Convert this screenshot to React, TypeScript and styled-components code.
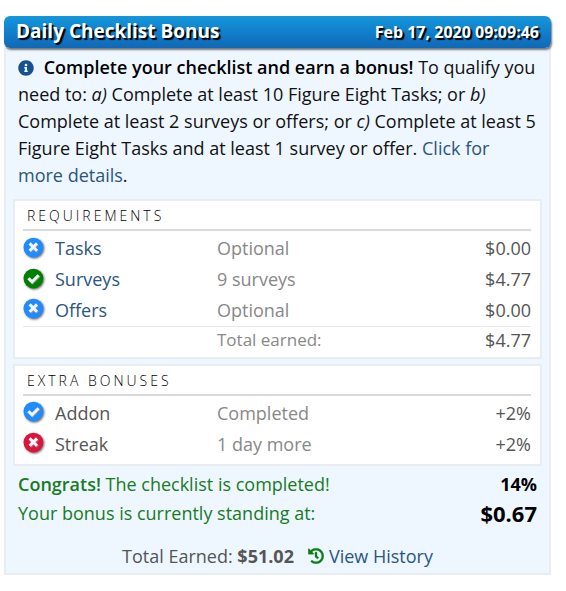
import React from "react";
import styled, { createGlobalStyle } from "styled-components";
import { FaHistory, FaInfoCircle } from "react-icons/fa";

const GlobalStyle = createGlobalStyle`
  *, *::before, *::after { box-sizing: border-box; }
  body {
    margin: 0;
    background: #fff;
    color: #111;
    font-family: "Open Sans", "Noto Sans", sans-serif;
    font-size: 18px;
    line-height: 27px;
  }
`;

const Page = styled.main`
  padding: 16px 15px 16px 4px;
`;

const Header = styled.header`
  position: relative;
  display: flex;
  align-items: center;
  justify-content: space-between;
  height: 32px;
  padding: 0 12px;
  border-radius: 6px;
  background: linear-gradient(#1497dc, #0f68b8);
  box-shadow: 1px 2px 2px #777;
  color: #fff;
  text-shadow: 2px 2px 1px #000;
`;

const Title = styled.h1`
  margin: 0;
  padding-bottom: 2px;
  font-size: 19px;
  font-weight: 700;
`;

const Clock = styled.time`
  font-size: 16px;
  font-weight: 700;
`;

const Body = styled.div`
  padding: 6px 7px 3px;
  border: 2px solid #e9edf1;
  border-top: 0;
  background: #eef7ff;
`;

const Intro = styled.p`
  margin: 0 4px 10px 5px;

  strong {
    margin-left: 5px;
    color: #000;
    font-weight: 600;
  }

  svg {
    color: #17528f;
    font-size: 16px;
    vertical-align: -2px;
  }
`;

const Link = styled.a`
  color: #2a5583;
  text-decoration: none;
`;

const Panel = styled.section`
  margin-bottom: 5px;
  padding: 2px 9px 4px 8px;
  border: 2px solid #e9edf1;
  background: #fff;
`;

const PanelTitle = styled.h2`
  margin: 0 0 2px;
  padding: 0 4px;
  border-bottom: 2px solid #d9dadb;
  color: #000;
  font-size: 14px;
  font-weight: 300;
  line-height: 26px;
  letter-spacing: 3px;
`;

const Table = styled.table`
  width: 100%;
  border-collapse: collapse;
  table-layout: fixed;
  color: #555;

  th, td {
    height: 31px;
    padding: 0;
    font-weight: 400;
    text-align: left;
  }
`;

const IconColumn = styled.col`
  width: 32px;
`;

const NameColumn = styled.col`
  width: 162px;
`;

const StateCell = styled.td`
  color: #888;
`;

const AmountCell = styled.td`
  && { text-align: right; }
`;

const TotalRow = styled.tr`
  border-top: 1px solid #e8eaec;

  && td, && th {
    height: 26px;
    line-height: 26px;
  }

  th {
    color: #888;
    font-size: 17px;
  }
`;

const StatusSvg = styled.svg`
  display: block;
  width: 24px;
  height: 24px;
  overflow: visible;

  circle {
    filter: drop-shadow(1px 1px 1px rgba(0, 0, 0, 0.6));
  }
`;

const Outcome = styled.dl`
  display: flex;
  flex-direction: column;
  gap: 2px;
  margin: 0 5px;
`;

const OutcomeRow = styled.div`
  display: flex;
  align-items: center;
  justify-content: space-between;
`;

const OutcomeLabel = styled.dt`
  color: #197b23;

  strong {
    font-weight: 600;
  }
`;

const OutcomeValue = styled.dd<{ $large?: boolean }>`
  margin: 0;
  color: #000;
  font-size: ${(p) => (p.$large ? 22 : 18)}px;
  font-weight: 700;
`;

const Footer = styled.footer`
  display: flex;
  align-items: center;
  justify-content: center;
  margin-top: 16px;
  color: #555;
`;

const HistoryLink = styled(Link)`
  display: flex;
  align-items: center;
  gap: 5px;
  margin-left: 14px;

  svg {
    color: #0a7d14;
    font-size: 16px;
    stroke: #0a7d14;
    stroke-width: 12px;
  }
`;

type Mark = "check" | "cross";

const marks: Record<Mark, string> = {
  check: "M5.4 10.2 L9 13.8 L15.6 7.2",
  cross: "M6.6 6.4 L14 13.8 M14 6.4 L6.6 13.8",
};

function StatusIcon({ mark, color, label }: { mark: Mark; color: string; label: string }) {
  return (
    <StatusSvg viewBox="0 0 24 24" role="img" aria-label={label}>
      <circle cx="10.4" cy="10.6" r="9.9" fill={color} />
      <path d={marks[mark]} fill="none" stroke="#999" strokeOpacity="0.7" strokeWidth="3" transform="translate(0.8 0.8)" />
      <path d={marks[mark]} fill="none" stroke="#f3f5f8" strokeWidth="3" />
    </StatusSvg>
  );
}

interface Item {
  name: string;
  state: string;
  amount: string;
  mark: Mark;
  color: string;
  status: string;
  linked?: boolean;
}

const requirements: Item[] = [
  { name: "Tasks", state: "Optional", amount: "$0.00", mark: "cross", color: "#1e8cff", status: "optional", linked: true },
  { name: "Surveys", state: "9 surveys", amount: "$4.77", mark: "check", color: "#008000", status: "done", linked: true },
  { name: "Offers", state: "Optional", amount: "$0.00", mark: "cross", color: "#1e8cff", status: "optional", linked: true },
];

const bonuses: Item[] = [
  { name: "Addon", state: "Completed", amount: "+2%", mark: "check", color: "#1e8cff", status: "active" },
  { name: "Streak", state: "1 day more", amount: "+2%", mark: "cross", color: "#dc143c", status: "missing" },
];

function ItemTable({ items, total, label }: { items: Item[]; total?: string; label: string }) {
  return (
    <Table aria-label={label}>
      <colgroup>
        <IconColumn />
        <NameColumn />
        <col />
        <col />
      </colgroup>
      <tbody>
        {items.map((item) => (
          <tr key={item.name}>
            <td>
              <StatusIcon mark={item.mark} color={item.color} label={item.status} />
            </td>
            <th scope="row">{item.linked ? <Link href="#">{item.name}</Link> : item.name}</th>
            <StateCell>{item.state}</StateCell>
            <AmountCell>{item.amount}</AmountCell>
          </tr>
        ))}
        {total && (
          <TotalRow>
            <td colSpan={2} />
            <th scope="row">Total earned:</th>
            <AmountCell>{total}</AmountCell>
          </TotalRow>
        )}
      </tbody>
    </Table>
  );
}

export default function App() {
  return (
    <>
      <GlobalStyle />
      <Page>
        <Header>
          <Title>Daily Checklist Bonus</Title>
          <Clock dateTime="2020-02-17T09:09:46">Feb 17, 2020 09:09:46</Clock>
        </Header>
        <Body>
          <Intro>
            <FaInfoCircle aria-hidden /> <strong>Complete your checklist and earn a bonus!</strong> To qualify you
            need to: <em>a)</em> Complete at least 10 Figure Eight Tasks; or <em>b)</em> Complete at least 2 surveys
            or offers; or <em>c)</em> Complete at least 5 Figure Eight Tasks and at least 1 survey or offer.{" "}
            <Link href="#">Click for more details</Link>.
          </Intro>
          <Panel>
            <PanelTitle>REQUIREMENTS</PanelTitle>
            <ItemTable items={requirements} total="$4.77" label="Requirements" />
          </Panel>
          <Panel>
            <PanelTitle>EXTRA BONUSES</PanelTitle>
            <ItemTable items={bonuses} label="Extra bonuses" />
          </Panel>
          <Outcome>
            <OutcomeRow>
              <OutcomeLabel>
                <strong>Congrats!</strong> The checklist is completed!
              </OutcomeLabel>
              <OutcomeValue>14%</OutcomeValue>
            </OutcomeRow>
            <OutcomeRow>
              <OutcomeLabel>Your bonus is currently standing at:</OutcomeLabel>
              <OutcomeValue $large>$0.67</OutcomeValue>
            </OutcomeRow>
          </Outcome>
          <Footer>
            <span>
              Total Earned: <strong>$51.02</strong>
            </span>
            <HistoryLink href="#">
              <FaHistory aria-hidden />
              View History
            </HistoryLink>
          </Footer>
        </Body>
      </Page>
    </>
  );
}
